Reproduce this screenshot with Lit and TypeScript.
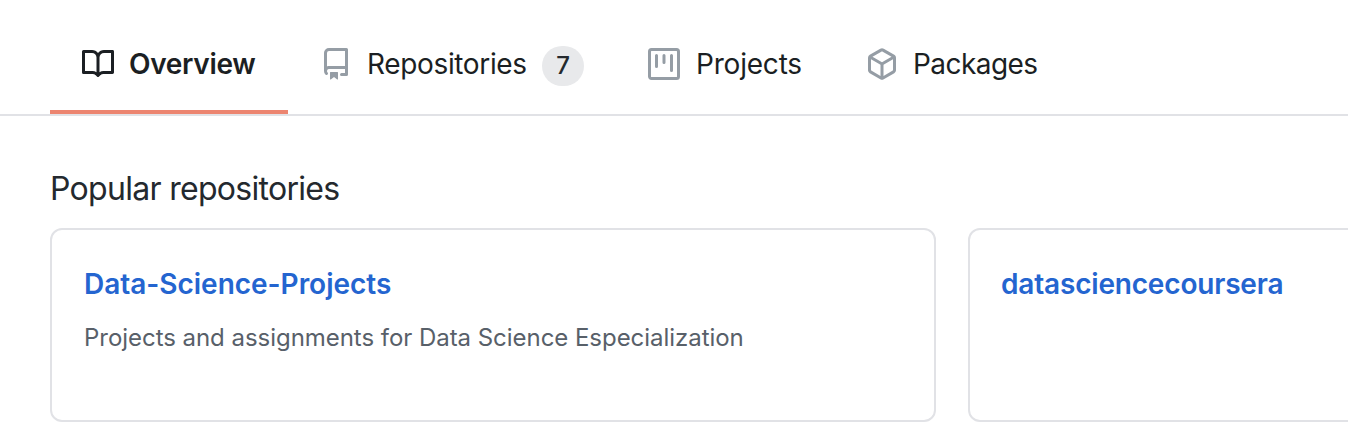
import { LitElement, html, css } from "lit";
import { customElement } from "lit/decorators.js";

const BOOK = "M0 1.75A.75.75 0 01.75 1h4.253c1.227 0 2.317.59 3 1.501A3.744 3.744 0 0111.006 1h4.245a.75.75 0 01.75.75v10.5a.75.75 0 01-.75.75h-4.507a2.25 2.25 0 00-1.591.659l-.622.621a.75.75 0 01-1.06 0l-.622-.621A2.25 2.25 0 005.258 13H.75a.75.75 0 01-.75-.75V1.75zm8.755 3a2.25 2.25 0 012.25-2.25H14.5v9h-3.757c-.71 0-1.4.201-1.992.572l.004-7.322zm-1.504 7.324l.004-5.073-.002-2.253A2.25 2.25 0 005.003 2.5H1.5v9h3.757a3.75 3.75 0 011.994.574z";
const REPO = "M2 2.5A2.5 2.5 0 014.5 0h8.75a.75.75 0 01.75.75v12.5a.75.75 0 01-.75.75h-2.5a.75.75 0 110-1.5h1.75v-2h-8a1 1 0 00-.714 1.7.75.75 0 01-1.072 1.05A2.495 2.495 0 012 11.5v-9zm10.5-1V9h-8c-.356 0-.694.074-1 .208V2.5a1 1 0 011-1h8zM5 12.25v3.25a.25.25 0 00.4.2l1.45-1.087a.25.25 0 01.3 0L8.6 15.7a.25.25 0 00.4-.2v-3.25a.25.25 0 00-.25-.25h-3.5a.25.25 0 00-.25.25z";
const PROJECT = "M1.75 0A1.75 1.75 0 000 1.75v12.5C0 15.216.784 16 1.75 16h12.5A1.75 1.75 0 0016 14.25V1.75A1.75 1.75 0 0014.25 0H1.75zM1.5 1.75a.25.25 0 01.25-.25h12.5a.25.25 0 01.25.25v12.5a.25.25 0 01-.25.25H1.75a.25.25 0 01-.25-.25V1.75zM11.75 3a.75.75 0 00-.75.75v7.5a.75.75 0 001.5 0v-7.5a.75.75 0 00-.75-.75zm-8.25.75a.75.75 0 011.5 0v5.5a.75.75 0 01-1.5 0v-5.5zM8 3a.75.75 0 00-.75.75v3.5a.75.75 0 001.5 0v-3.5A.75.75 0 008 3z";
const PACKAGE = "M8.878.392a1.75 1.75 0 00-1.756 0l-5.25 3.045A1.75 1.75 0 001 4.951v6.098c0 .624.332 1.2.872 1.514l5.25 3.045a1.75 1.75 0 001.756 0l5.25-3.045c.54-.313.872-.89.872-1.514V4.951c0-.624-.332-1.2-.872-1.514L8.878.392zM7.875 1.69a.25.25 0 01.25 0l4.63 2.685L8 7.133 3.245 4.375l4.63-2.685zM2.5 5.677v5.372c0 .09.047.171.125.216l4.625 2.683V8.432L2.5 5.677zm6.25 8.271l4.625-2.683a.25.25 0 00.125-.216V5.677L8.75 8.432v5.516z";

const icon = (d: string) => html`<svg class="icon" viewBox="0 0 16 16" aria-hidden="true"><path fill-rule="evenodd" d=${d}></path></svg>`;

@customElement("app-root")
export class AppRoot extends LitElement {
  static styles = css`
    :host {
      display: block;
      height: 440px;
      overflow: hidden;
      background: #fff;
      font-family: Inter, "Liberation Sans", sans-serif;
      color: #24292e;
    }
    * { box-sizing: border-box; }
    .tabs {
      display: flex;
      height: 116px;
      padding-left: 50px;
      border-bottom: 2px solid #e1e2e6;
    }
    .tab {
      display: flex;
      align-items: center;
      gap: 16px;
      flex: none;
      height: 114px;
      padding: 18px 32px 0;
      border-bottom: 4px solid transparent;
      font-size: 28px;
      line-height: 42px;
      color: #1b1f23;
      white-space: nowrap;
    }
    .tab.selected { border-bottom-color: #ec8570; font-weight: 600; }
    .icon { display: block; flex: none; width: 32px; height: 32px; fill: #959da5; }
    .selected .icon { fill: #1b1f23; }
    .overview { width: 126px; letter-spacing: -0.3px; text-indent: -1px; }
    .repositories { width: 158px; letter-spacing: -0.35px; text-indent: -1px; }
    .projects { width: 106px; letter-spacing: -0.2px; }
    .packages { width: 124px; letter-spacing: -0.55px; text-indent: -1px; }
    .count {
      width: 42px;
      height: 40px;
      margin-top: 4px;
      border-radius: 20px;
      background: #e8e9eb;
      color: #24292e;
      font-size: 24px;
      font-weight: 500;
      line-height: 40px;
      text-align: center;
    }
    .content { padding: 49px 0 0 50px; }
    h2 {
      margin: 0 0 15px;
      font-size: 32px;
      font-weight: 400;
      line-height: 48px;
      letter-spacing: -0.7px;
    }
    .cards { display: grid; grid-template-columns: 886px 886px; gap: 32px; }
    .card {
      height: 194px;
      padding: 33px 32px;
      border: 2px solid #e1e2e6;
      border-radius: 12px;
    }
    .name {
      display: block;
      color: #2465d0;
      font-size: 28px;
      font-weight: 600;
      line-height: 42px;
      text-decoration: none;
      white-space: nowrap;
    }
    .first { letter-spacing: -0.02px; }
    .second { letter-spacing: -0.18px; text-indent: -1px; }
    .desc {
      margin: 15px 0 0;
      color: #586069;
      font-size: 24px;
      line-height: 36px;
      letter-spacing: -0.04px;
      white-space: nowrap;
    }
  `;

  render() {
    return html`
      <nav class="tabs">
        <div class="tab selected">${icon(BOOK)}<span class="overview">Overview</span></div>
        <div class="tab">${icon(REPO)}<span class="repositories">Repositories</span><span class="count">7</span></div>
        <div class="tab">${icon(PROJECT)}<span class="projects">Projects</span></div>
        <div class="tab">${icon(PACKAGE)}<span class="packages">Packages</span></div>
      </nav>
      <main class="content">
        <h2>Popular repositories</h2>
        <div class="cards">
          <article class="card">
            <a class="name first">Data-Science-Projects</a>
            <p class="desc">Projects and assignments for Data Science Especialization</p>
          </article>
          <article class="card"><a class="name second">datasciencecoursera</a></article>
        </div>
      </main>
    `;
  }
}
